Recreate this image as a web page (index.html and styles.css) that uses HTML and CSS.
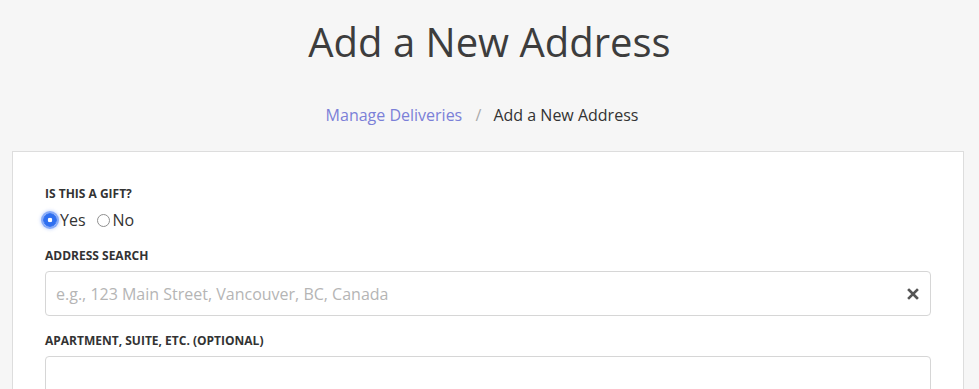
FILE: index.html
```html
<!DOCTYPE html>
<html>
    <head>
        <meta charset="UTF-8">
        <meta name="viewport" content="width=device-width, initial-scale=1.0">
        <link rel="stylesheet" href="styles.css">
    </head>
    <body>
        <h1 class="pageTitle">Add a New Address</h1>
        <div class="breadcrumb">
            <a href="#" class="crumbLink">Manage Deliveries</a>
            <span class="crumbSep">/</span>
            <span class="crumbCurrent">Add a New Address</span>
        </div>

        <form class="card">
            <div class="field fieldRadio">
                <label class="fieldLabel">Is this a gift?</label>
                <div class="radioRow">
                    <label class="radioOption"><input type="radio" name="gift" class="radio radioFocus" checked>Yes</label>
                    <label class="radioOption"><input type="radio" name="gift" class="radio">No</label>
                </div>
            </div>

            <div class="field">
                <label class="fieldLabel">Address search</label>
                <div class="inputWrap">
                    <input type="text" class="textInput" placeholder="e.g., 123 Main Street, Vancouver, BC, Canada">
                    <span class="clearBtn">
                        <svg width="12" height="12" viewBox="0 0 12 12">
                            <path d="M2 2 L10 10 M10 2 L2 10" stroke="#555" stroke-width="2.6" stroke-linecap="square"/>
                        </svg>
                    </span>
                </div>
            </div>

            <div class="field">
                <label class="fieldLabel">Apartment, suite, etc. (optional)</label>
                <div class="inputWrap">
                    <input type="text" class="textInput">
                </div>
            </div>
        </form>
    </body>
</html>
```
FILE: styles.css
```css
body {
    margin: 0;
    background-color: #f6f6f6;
    font-family: "Open Sans", sans-serif;
    color: #333;
}

.pageTitle {
    margin: 0;
    padding-top: 12px;
    text-align: center;
    font-size: 40px;
    font-weight: 400;
    line-height: 60px;
    color: #3d3d3d;
}

.breadcrumb {
    margin-top: 32px;
    padding-right: 15px;
    text-align: center;
    font-size: 16px;
    line-height: 22px;
}

.crumbLink {
    color: #7b80d8;
    text-decoration: none;
}

.crumbSep {
    color: #aaa;
    margin: 0 8px 0 9px;
}

.crumbCurrent {
    color: #333;
}

.card {
    margin: 25px 15px 0 12px;
    background-color: #fff;
    border: 1px solid #ddd;
    border-bottom: none;
    padding: 34px 32px 40px 32px;
    height: 300px;
}

.field {
    margin-bottom: 17px;
}

.fieldLabel {
    display: block;
    font-size: 12px;
    font-weight: 700;
    text-transform: uppercase;
    color: #333;
    line-height: 16px;
    margin-bottom: 7px;
}

.radioRow {
    display: flex;
    gap: 11px;
    margin-top: 6px;
    margin-left: -2px;
}

.radioOption {
    display: flex;
    align-items: center;
    font-size: 16px;
    line-height: 22px;
    color: #333;
}

.radio {
    appearance: none;
    -webkit-appearance: none;
    box-sizing: border-box;
    margin: 0 3px 0 0;
    width: 13px;
    height: 13px;
    border: 1px solid #8f8f8f;
    border-radius: 50%;
    background-color: #fff;
}

.radio:checked {
    width: 14px;
    height: 14px;
    border-color: #2f6ff0;
    background: radial-gradient(circle, #fff 0 2px, #2f6ff0 2.6px);
}

.radioFocus {
    box-shadow: 0 0 0 2px rgba(70, 125, 245, 0.55), 0 0 3px 3px rgba(70, 125, 245, 0.25);
}

.inputWrap {
    position: relative;
}

.textInput {
    box-sizing: border-box;
    width: 100%;
    height: 45px;
    border: 1px solid #d6d6d6;
    border-radius: 4px;
    padding: 0 40px 0 10px;
    font-family: "Open Sans", sans-serif;
    font-size: 16px;
    color: #333;
    background-color: #fff;
}

.textInput::placeholder {
    color: #b5b5b5;
}

.clearBtn {
    position: absolute;
    right: 12px;
    top: 17px;
    display: flex;
}
```
